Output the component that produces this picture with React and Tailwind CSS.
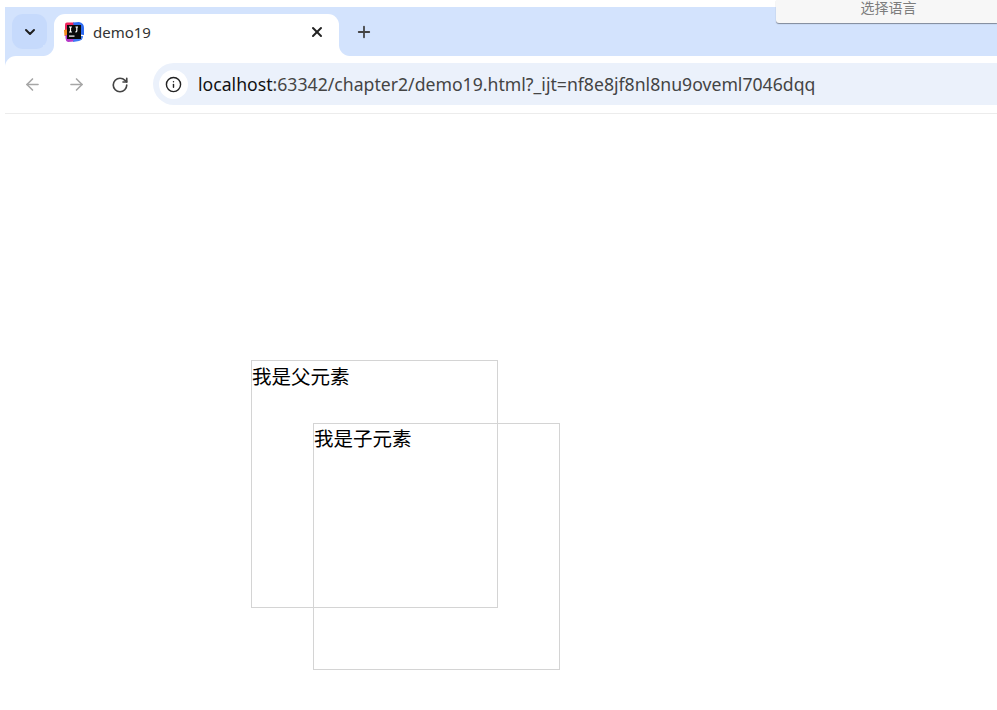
import React from 'react';
import { ArrowLeft, ArrowRight, ChevronDown, Info, Plus, RotateCw, X } from 'lucide-react';

const uiFont = "font-['Noto_Sans','Noto_Sans_CJK_SC',sans-serif]";

// IntelliJ style favicon
function IdeaIcon() {
  return (
    <svg width="20" height="20" viewBox="0 0 20 20" className="shrink-0">
      <path d="M1 2.5 Q1 0.5 3 0.5 H10 V10 H1 Z" fill="#f0245e" />
      <path d="M9 0.5 L15 0 Q20 1 20 6 V13 L12 12 Z" fill="#2f6bf0" />
      <path d="M0 8 L4 7 V14 H0.5 Z" fill="#f58a1f" />
      <path d="M1.5 13 H10 V19.5 L4 20 Q1.5 19 1.5 16 Z" fill="#b638c8" />
      <path d="M10 14 H19 Q19 18 15 19 L9 20 Z" fill="#3d7bf5" />
      <rect x="3" y="3" width="14" height="14" fill="#0a0a0a" />
      <rect x="5" y="13.5" width="5.5" height="1.2" fill="#fff" />
      <path d="M5 5 H8 M6.5 5 V10 M5 10 H8 M11.5 5 H14 M12.8 5 V9 Q12.8 10 11.3 10" stroke="#fff" strokeWidth="1.2" fill="none" />
    </svg>
  );
}

export default function App() {
  return (
    <div className={`relative w-[997px] h-[710px] overflow-hidden bg-white pt-[7px] pl-[5px] ${uiFont}`}>
      {/* language popup over the browser frame */}
      <div className="absolute right-0 top-0 w-[221px] h-[23px] bg-[#f7f7f7] rounded-bl-[3px] shadow-[0_1px_1px_rgba(0,0,0,0.4)] flex items-start justify-center pl-[4px] text-[14px] leading-[16px] text-[#7d7d7d]">
        选择语言
      </div>

      <div className="bg-[#d3e3fd]">
        {/* tab strip */}
        <div className="h-[49px] flex items-end pl-[7px]">
          <div className="w-[35px] h-[35px] mb-[7px] rounded-[11px] bg-[#c6dafc] flex items-center justify-center text-[#1f1f1f]">
            <ChevronDown size={16} strokeWidth={3} />
          </div>
          <div className="relative w-[285px] h-[42px] ml-[7px] bg-white rounded-t-[11px] flex items-center pl-[10px] pr-[14px] pb-[6px]">
            <div className="absolute left-[-11px] bottom-0 w-[11px] h-[11px] bg-[radial-gradient(circle_at_0_0,#d3e3fd_10.5px,#ffffff_11.5px)]" />
            <div className="absolute right-[-11px] bottom-0 w-[11px] h-[11px] bg-[radial-gradient(circle_at_100%_0,#d3e3fd_10.5px,#ffffff_11.5px)]" />
            <IdeaIcon />
            <span className="ml-[9px] flex-1 text-[15px] text-[#333]">demo19</span>
            <X size={16} strokeWidth={3} className="text-[#222]" />
          </div>
          <div className="h-[42px] ml-[16px] pb-[6px] flex items-center text-[#444]">
            <Plus size={18} strokeWidth={2.4} />
          </div>
        </div>

        {/* toolbar */}
        <div className="relative h-[58px] bg-white rounded-tl-[11px] border-b border-[#ececec] flex items-center pl-[18px]">
          <ArrowLeft size={19} strokeWidth={2} className="text-[#a6a6a6]" />
          <ArrowRight size={19} strokeWidth={2} className="ml-[25px] text-[#a6a6a6]" />
          <RotateCw size={18} strokeWidth={2.2} className="ml-[25px] text-[#444]" />
          <div className="ml-[24px] flex-1 h-[42px] mt-[-1px] rounded-l-[21px] bg-[#ebf1fb] flex items-center pl-[6px]">
            <div className="w-[29px] h-[29px] rounded-full bg-white flex items-center justify-center text-[#222]">
              <Info size={17} strokeWidth={2} />
            </div>
            <span className="ml-[10px] text-[17.65px] text-[#444] whitespace-nowrap">
              <span className="text-[#111]">localhost</span>:63342/chapter2/demo19.html?_ijt=nf8e8jf8nl8nu9oveml7046dqq
            </span>
          </div>
        </div>
      </div>

      {/* page content */}
      <div className="pt-[246px] pl-[246px] font-['Liberation_Sans','Noto_Sans_CJK_SC',sans-serif] text-[19.5px] leading-[32px] text-black">
        <div className="relative w-[247px] h-[248px] border border-[#d4d4d4]">
          我是父元素
          <div className="absolute left-[61px] top-[62px] w-[247px] h-[247px] border border-[#d4d4d4] leading-[30px]">
            我是子元素
          </div>
        </div>
      </div>
    </div>
  );
}
